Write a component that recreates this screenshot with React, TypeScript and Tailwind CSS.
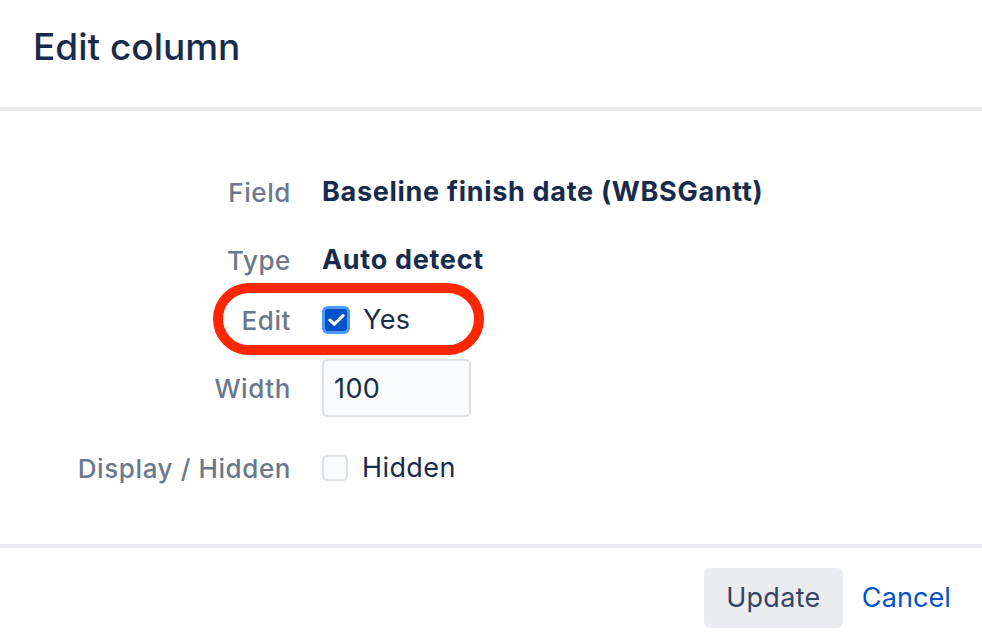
import { useState } from "react";

function Check({ checked, onToggle }: { checked: boolean; onToggle: () => void }) {
  return (
    <button
      onClick={onToggle}
      className={
        checked
          ? "w-[28px] h-[28px] rounded-[6px] bg-[#0052cc] border-[3px] border-[#4c9aff] flex items-center justify-center"
          : "w-[26px] h-[26px] rounded-[5px] bg-[#fafbfc] border-2 border-[#dfe1e6]"
      }
    >
      {checked && (
        <svg width="17" height="14" viewBox="0 0 17 14" fill="none">
          <path d="M2 7.2L6.3 11.2L15 2.6" stroke="white" strokeWidth="3.2" strokeLinecap="round" strokeLinejoin="round" />
        </svg>
      )}
    </button>
  );
}

export default function App() {
  const [editable, setEditable] = useState(true);
  const [hidden, setHidden] = useState(false);
  const [width, setWidth] = useState("100");

  const label = "w-[291px] text-right text-[#6b778c] font-medium text-[26px] tracking-[0.6px]";

  return (
    <div
      className="w-[982px] h-[640px] bg-white text-[#172b4d] overflow-hidden"
      style={{ fontFamily: "Inter, 'Noto Sans', sans-serif" }}
    >
      {/* Header */}
      <div className="h-[107px] pl-[33px] flex items-center pb-[14px]">
        <h1 className="text-[37px] font-medium leading-none">Edit column</h1>
      </div>
      <div className="h-[4px] bg-[#ebecf0]" />

      {/* Body */}
      <div className="h-[433px] pt-[57px]">
        <div className="flex items-center h-[48px]">
          <div className={label}>Field</div>
          <div className="ml-[31px] font-bold text-[27px] tracking-[0.7px]">Baseline finish date (WBSGantt)</div>
        </div>

        <div className="flex items-center h-[48px] mt-[20px]">
          <div className={label}>Type</div>
          <div className="ml-[31px] font-bold text-[27px] tracking-[0.7px]">Auto detect</div>
        </div>

        <div className="relative flex items-center h-[48px] mt-[12px]">
          <div className={label}>Edit</div>
          <label className="ml-[31px] flex items-center gap-[13px] cursor-pointer">
            <Check checked={editable} onToggle={() => setEditable(!editable)} />
            <span className="text-[27px] tracking-[0.4px]">Yes</span>
          </label>
          {/* red annotation ring */}
          <div className="absolute left-[213px] top-[-13px] w-[271px] h-[72px] rounded-full border-[10px] border-[#ff2600] pointer-events-none" />
        </div>

        <div className="flex items-center h-[58px] mt-[15px]">
          <div className={label}>Width</div>
          <input
            value={width}
            onChange={e => setWidth(e.target.value)}
            className="ml-[31px] w-[149px] h-[58px] px-[10px] bg-[#fafbfc] border-2 border-[#dfe1e6] rounded-[5px] outline-none text-[27px] tracking-[0.4px] text-[#172b4d]"
          />
        </div>

        <div className="flex items-center h-[48px] mt-[27px]">
          <div className={label}>Display / Hidden</div>
          <label className="ml-[31px] flex items-center gap-[14px] cursor-pointer">
            <Check checked={hidden} onToggle={() => setHidden(!hidden)} />
            <span className="text-[27px] tracking-[0.4px]">Hidden</span>
          </label>
        </div>
      </div>

      <div className="h-[4px] bg-[#ebecf0]" />

      {/* Footer */}
      <div className="flex justify-end items-center pr-[31px] pt-[20px]">
        <button className="h-[60px] w-[139px] rounded-[6px] bg-[#ebecf0] text-[#344563] text-[27px] tracking-[0.3px]">Update</button>
        <button className="ml-[19px] text-[#0052cc] text-[27px] tracking-[0.1px]">Cancel</button>
      </div>
    </div>
  );
}
